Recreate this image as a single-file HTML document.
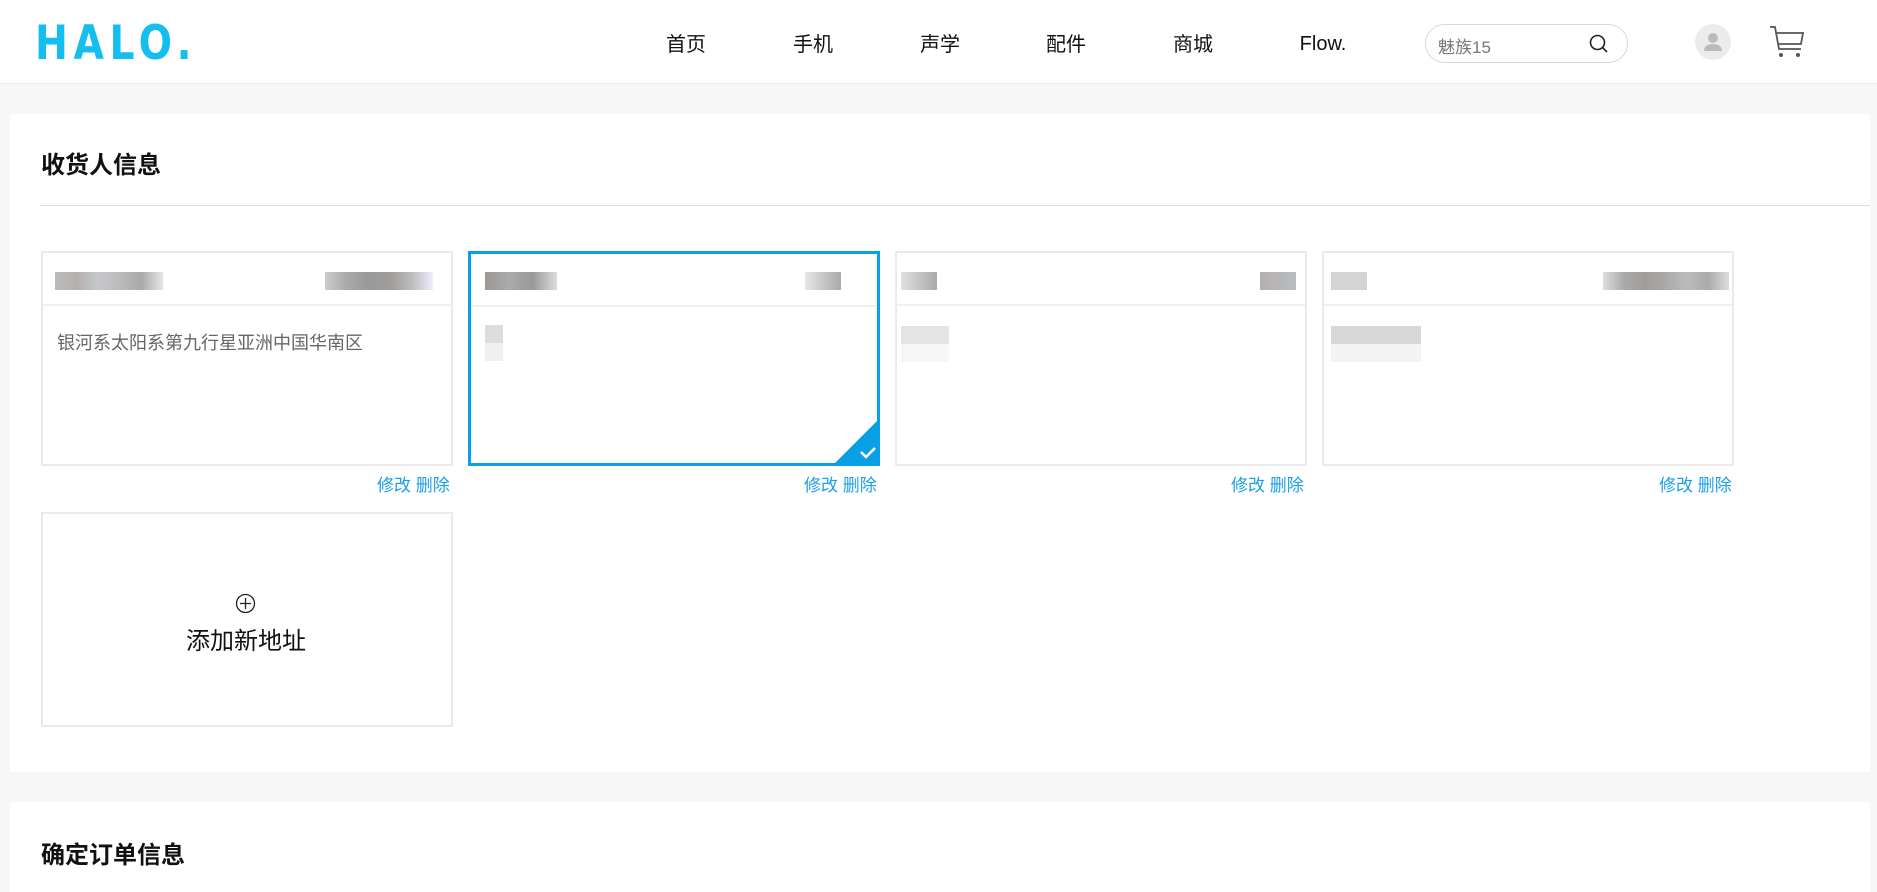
<!DOCTYPE html>
<html><head><meta charset="utf-8"><style>
*{margin:0;padding:0;box-sizing:border-box}
body{width:1877px;height:892px;overflow:hidden;background:#f7f7f7;font-family:"Liberation Sans","Noto Sans CJK SC",sans-serif;position:relative}
.a{position:absolute}
.hdr{left:0;top:0;width:1877px;height:84px;background:#fff;border-bottom:1px solid #eee}
.logo{left:35px;top:19px;font-size:47px;line-height:50px;font-weight:bold;color:#14bff0;letter-spacing:6px;font-family:"DejaVu Sans Condensed","Liberation Sans",sans-serif;transform:scaleX(0.93);transform-origin:0 0}
.nav{top:31px;font-size:20px;line-height:28px;color:#111;transform:translateX(-50%)}
.search{left:1425px;top:24px;width:203px;height:39px;border:1px solid #d8d8d8;border-radius:20px;background:#fff}
.panel{background:#fff}
.card{width:412px;height:215px;border:2px solid #eaeaea;background:#fff}
.card .line{position:absolute;left:0;right:0;top:51px;height:2px;background:#f0f0f0}
.blk{position:absolute;height:18px}
.ed{font-size:17px;color:#1ba0e6;top:471px}
</style></head><body>
<div class="a hdr"></div>
<div class="a logo">HALO.</div>
<div class="a nav" style="left:686px">首页</div>
<div class="a nav" style="left:813px">手机</div>
<div class="a nav" style="left:940px">声学</div>
<div class="a nav" style="left:1066px">配件</div>
<div class="a nav" style="left:1193px">商城</div>
<div class="a nav" style="left:1323px;top:30px">Flow.</div>
<div class="a search"><span class="a" style="left:12px;top:8px;font-size:17px;color:#777">魅族15</span>
<svg class="a" style="left:162px;top:8px" width="22" height="22" viewBox="0 0 22 22"><circle cx="9.5" cy="9.5" r="7" fill="none" stroke="#222" stroke-width="1.6"/><path d="M14.5 14.5L19 19" stroke="#222" stroke-width="1.6"/></svg></div>
<svg class="a" style="left:1695px;top:24px" width="36" height="36" viewBox="0 0 36 36"><circle cx="18" cy="18" r="18" fill="#ececec"/><circle cx="18" cy="14" r="5" fill="#bbb"/><path d="M9 27c0-5 4-7 9-7s9 2 9 7z" fill="#bbb"/></svg>
<svg class="a" style="left:1768px;top:22px" width="38" height="38" viewBox="0 0 38 38"><path d="M2 5h5l4 22h22M9 11h26l-2 11H11" fill="none" stroke="#555" stroke-width="1.8"/><circle cx="13" cy="33" r="2" fill="#555"/><circle cx="30" cy="33" r="2" fill="#555"/></svg>

<div class="a panel" style="left:10px;top:114px;width:1860px;height:658px"></div>
<div class="a" style="left:41px;top:145px;font-size:24px;font-weight:bold;color:#111">收货人信息</div>
<div class="a" style="left:40px;top:205px;width:1830px;height:1px;background:#ddd"></div>

<div class="a card" style="left:41px;top:251px"><div class="line"></div>
<div class="blk" style="left:12px;top:19px;width:108px;background:linear-gradient(90deg,#bbb,#b5b0ae,#c6c8ca,#bbb,#aaa,#e6e6e6)"></div>
<div class="blk" style="left:282px;top:19px;width:108px;background:linear-gradient(90deg,#ccc,#aaa,#999,#a09c9a,#bbb,#eef)"></div>
<div class="a" style="left:14px;top:76px;font-size:18px;color:#666">银河系太阳系第九行星亚洲中国华南区</div></div>
<div class="a ed" style="left:377px">修改 删除</div>

<div class="a card" style="left:468px;top:251px;border:3px solid #0aa0e6"><div class="line"></div>
<div class="blk" style="left:14px;top:18px;width:72px;background:linear-gradient(90deg,#9c9894,#aaa,#999,#ddd)"></div>
<div class="blk" style="left:334px;top:18px;width:36px;background:linear-gradient(90deg,#e6e6e6,#aaa)"></div>
<div class="blk" style="left:14px;top:71px;width:18px;height:36px;background:linear-gradient(#ddd 50%,#f0f0f0 50%)"></div>
<svg class="a" style="right:-3px;bottom:-3px" width="48" height="48" viewBox="0 0 48 48"><path d="M48 0V48H0z" fill="#0aa0e6"/><path d="M29 34l5 5 9-9" fill="none" stroke="#fff" stroke-width="2.5"/></svg></div>
<div class="a ed" style="left:804px">修改 删除</div>

<div class="a card" style="left:895px;top:251px"><div class="line"></div>
<div class="blk" style="left:4px;top:19px;width:36px;background:linear-gradient(90deg,#e0e0e0,#aaa)"></div>
<div class="blk" style="left:363px;top:19px;width:36px;background:linear-gradient(90deg,#b5b0ae,#b8bcc2)"></div>
<div class="blk" style="left:4px;top:73px;width:48px;height:36px;background:linear-gradient(#e4e4e4 50%,#f6f6f6 50%)"></div></div>
<div class="a ed" style="left:1231px">修改 删除</div>

<div class="a card" style="left:1322px;top:251px"><div class="line"></div>
<div class="blk" style="left:7px;top:19px;width:36px;background:#d4d4d4"></div>
<div class="blk" style="left:279px;top:19px;width:126px;background:linear-gradient(90deg,#ddd,#aaa,#a09c98,#aaa,#bbb,#aaa,#ddd)"></div>
<div class="blk" style="left:7px;top:73px;width:90px;height:36px;background:linear-gradient(#d8d8d8 50%,#f4f4f4 50%)"></div></div>
<div class="a ed" style="left:1659px">修改 删除</div>

<div class="a card" style="left:41px;top:512px"></div>
<svg class="a" style="left:235px;top:593px" width="21" height="21" viewBox="0 0 21 21"><circle cx="10.5" cy="10.5" r="9" fill="none" stroke="#222" stroke-width="1.3"/><path d="M10.5 5v11M5 10.5h11" stroke="#222" stroke-width="1.3"/></svg>
<div class="a" style="left:186px;top:621px;font-size:24px;color:#111">添加新地址</div>

<div class="a panel" style="left:10px;top:802px;width:1860px;height:90px"></div>
<div class="a" style="left:41px;top:835px;font-size:24px;font-weight:bold;color:#111">确定订单信息</div>
</body></html>
